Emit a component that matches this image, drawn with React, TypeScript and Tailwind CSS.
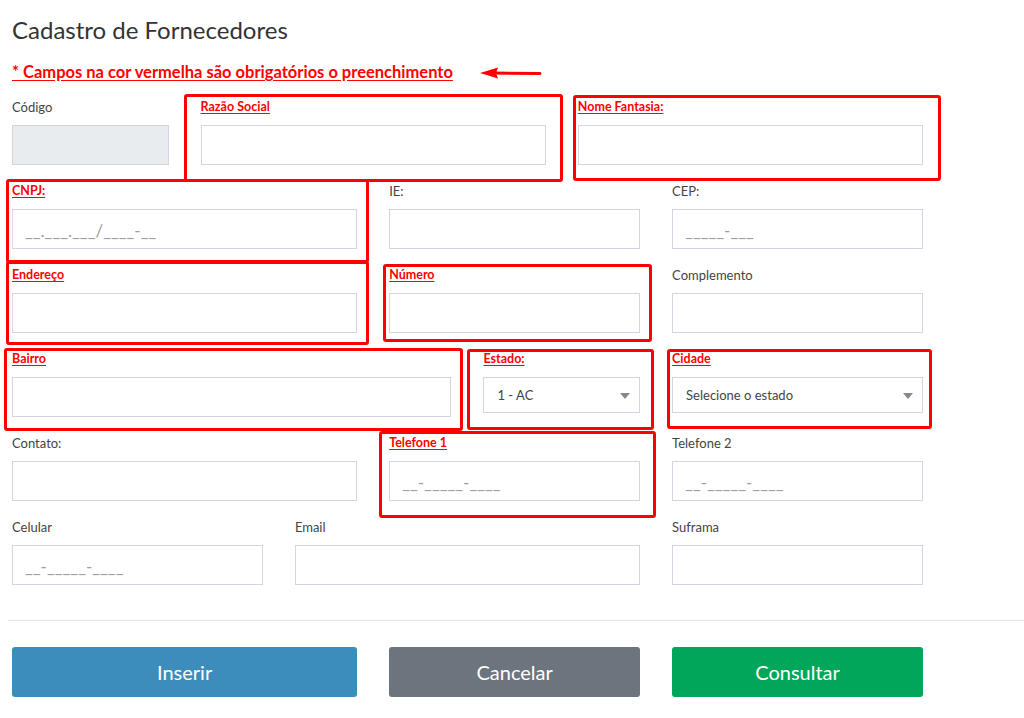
import React from "react";

const F = "font-['Lato','Liberation_Sans',sans-serif]";

function Label({ text, req }: { text: string; req?: boolean }) {
  return req ? (
    <label className="block h-5 leading-5 mb-2 text-[12.5px] font-bold text-[#ff0000] underline underline-offset-2">
      {text}
    </label>
  ) : (
    <label className="block h-5 leading-5 mb-2 text-[13px] text-[#444]">{text}</label>
  );
}

function Field({
  label,
  req,
  span,
  ph,
  disabled,
}: {
  label: string;
  req?: boolean;
  span: string;
  ph?: string;
  disabled?: boolean;
}) {
  return (
    <div className={`${span} mb-4`}>
      <Label text={label} req={req} />
      <input
        disabled={disabled}
        placeholder={ph}
        className={`block w-full h-10 border border-[#d2d6de] px-3 pt-[3px] text-[17px] outline-none placeholder:text-[#a0a0a0] ${
          disabled ? "bg-[#e9ecef]" : "bg-white"
        }`}
      />
    </div>
  );
}

function SelectField({ label, span, value }: { label: string; span: string; value: string }) {
  return (
    <div className={`${span} mb-4`}>
      <Label text={label} req />
      <div className="relative">
        <select className="block w-full h-9 appearance-none border border-[#d2d6de] bg-white pl-[13px] pr-8 pt-[2px] text-[13px] text-[#444] outline-none">
          <option>{value}</option>
        </select>
        <span className="absolute right-[10px] top-[16px] w-0 h-0 border-l-[5px] border-r-[5px] border-t-[6px] border-l-transparent border-r-transparent border-t-[#888]" />
      </div>
    </div>
  );
}

function Box({ x, y, w, h }: { x: number; y: number; w: number; h: number }) {
  return (
    <div
      className="absolute border-[3px] border-[#ff0000] rounded-[3px] pointer-events-none"
      style={{ left: x, top: y, width: w, height: h }}
    />
  );
}

export default function App() {
  return (
    <div className={`relative w-[1024px] h-[718px] bg-white overflow-hidden ${F}`}>
      <div className="pl-3 pt-[14px]">
        <h1 className="text-[24px] leading-8 text-[#333]">Cadastro de Fornecedores</h1>
        <div className="mt-4 h-5 leading-5 text-[16.5px] font-bold text-[#ff0000] underline underline-offset-2">
          * Campos na cor vermelha são obrigatórios o preenchimento
        </div>

        <div className="mt-[15px] w-[911px] grid grid-cols-10 gap-x-8 items-start">
          <Field label="Código" span="col-span-2" disabled />
          <Field label="Razão Social" req span="col-span-4" />
          <Field label="Nome Fantasia:" req span="col-span-4" />

          <Field label="CNPJ:" req span="col-span-4" ph="__.___.___/____-__" />
          <Field label="IE:" span="col-span-3" />
          <Field label="CEP:" span="col-span-3" ph="_____-___" />

          <Field label="Endereço" req span="col-span-4" />
          <Field label="Número" req span="col-span-3" />
          <Field label="Complemento" span="col-span-3" />

          <Field label="Bairro" req span="col-span-5" />
          <SelectField label="Estado:" span="col-span-2" value="1 - AC" />
          <SelectField label="Cidade" span="col-span-3" value="Selecione o estado" />

          <Field label="Contato:" span="col-span-4" />
          <Field label="Telefone 1" req span="col-span-3" ph="__-_____-____" />
          <Field label="Telefone 2" span="col-span-3" ph="__-_____-____" />

          <Field label="Celular" span="col-span-3" ph="__-_____-____" />
          <Field label="Email" span="col-span-4" />
          <Field label="Suframa" span="col-span-3" />
        </div>

        <div className="mt-[19px] -ml-1 h-px bg-[#e6e6e6]" />

        <div className="mt-[26px] w-[911px] grid grid-cols-10 gap-x-8">
          <button className="col-span-4 h-[50px] rounded-[3px] bg-[#3c8dbc] text-white text-[20px]">Inserir</button>
          <button className="col-span-3 h-[50px] rounded-[3px] bg-[#6c757d] text-white text-[20px]">Cancelar</button>
          <button className="col-span-3 h-[50px] rounded-[3px] bg-[#00a65a] text-white text-[20px]">Consultar</button>
        </div>
      </div>

      <svg className="absolute left-[478px] top-[66px]" width="66" height="14" viewBox="0 0 66 14">
        <line x1="14" y1="7" x2="62" y2="7.5" stroke="#ff0000" strokeWidth="3" strokeLinecap="round" />
        <polygon points="2,7 20,1.5 18,7 20,12.5" fill="#ff0000" />
      </svg>

      <Box x={184} y={94} w={379} h={88} />
      <Box x={573} y={95} w={368} h={86} />
      <Box x={6} y={179} w={363} h={84} />
      <Box x={6} y={261} w={363} h={84} />
      <Box x={383} y={264} w={269} h={78} />
      <Box x={4} y={348} w={459} h={83} />
      <Box x={467} y={349} w={187} h={81} />
      <Box x={667} y={349} w={265} h={80} />
      <Box x={379} y={431} w={277} h={87} />
    </div>
  );
}
